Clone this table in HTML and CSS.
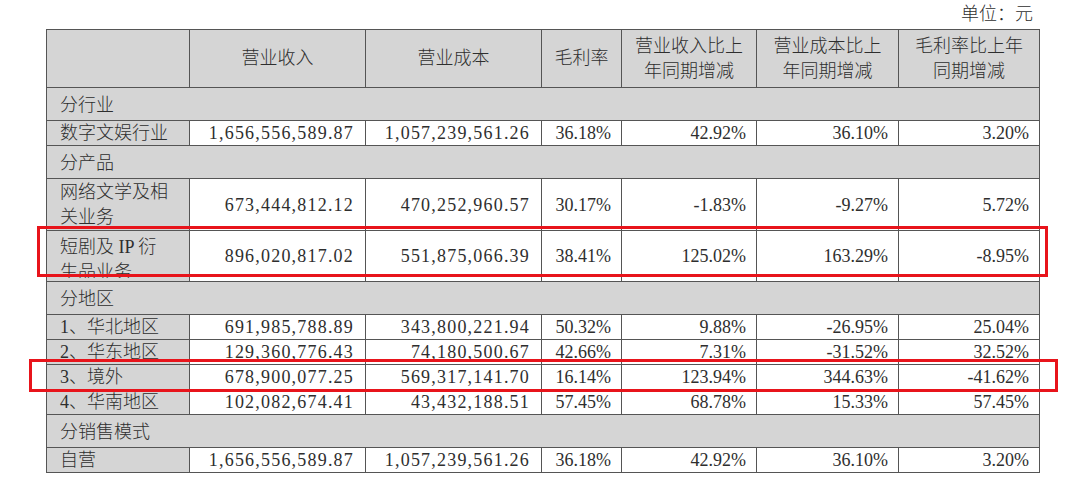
FILE: index.html
```html
<!DOCTYPE html>
<html lang="zh-CN">
<head>
<meta charset="utf-8">
<title>营业收入构成</title>
<link rel="stylesheet" href="styles.css">
</head>
<body>
<div class="page">
  <div class="unit">单位：元</div>
  <div class="sheet">
    <table class="tbl">
      <colgroup>
        <col class="c1"><col class="c2"><col class="c3"><col class="c4"><col class="c5"><col class="c6"><col class="c7">
      </colgroup>
      <thead>
        <tr class="head">
          <th></th>
          <th>营业收入</th>
          <th>营业成本</th>
          <th>毛利率</th>
          <th>营业收入比上<br>年同期增减</th>
          <th>营业成本比上<br>年同期增减</th>
          <th>毛利率比上年<br>同期增减</th>
        </tr>
      </thead>
      <tbody>
        <tr class="sec"><td colspan="7">分行业</td></tr>
        <tr class="row">
          <td class="lbl">数字文娱行业</td>
          <td class="amt">1,656,556,589.87</td>
          <td class="amt">1,057,239,561.26</td>
          <td class="pct">36.18%</td>
          <td class="pct">42.92%</td>
          <td class="pct">36.10%</td>
          <td class="pct">3.20%</td>
        </tr>
        <tr class="sec"><td colspan="7">分产品</td></tr>
        <tr class="row two">
          <td class="lbl">网络文学及相关业务</td>
          <td class="amt">673,444,812.12</td>
          <td class="amt">470,252,960.57</td>
          <td class="pct">30.17%</td>
          <td class="pct">-1.83%</td>
          <td class="pct">-9.27%</td>
          <td class="pct">5.72%</td>
        </tr>
        <tr class="row tall">
          <td class="lbl"><div class="clip">短剧及 IP 衍生品业务</div></td>
          <td class="amt">896,020,817.02</td>
          <td class="amt">551,875,066.39</td>
          <td class="pct">38.41%</td>
          <td class="pct">125.02%</td>
          <td class="pct">163.29%</td>
          <td class="pct">-8.95%</td>
        </tr>
        <tr class="sec"><td colspan="7">分地区</td></tr>
        <tr class="row">
          <td class="lbl">1、华北地区</td>
          <td class="amt">691,985,788.89</td>
          <td class="amt">343,800,221.94</td>
          <td class="pct">50.32%</td>
          <td class="pct">9.88%</td>
          <td class="pct">-26.95%</td>
          <td class="pct">25.04%</td>
        </tr>
        <tr class="row">
          <td class="lbl">2、华东地区</td>
          <td class="amt">129,360,776.43</td>
          <td class="amt">74,180,500.67</td>
          <td class="pct">42.66%</td>
          <td class="pct">7.31%</td>
          <td class="pct">-31.52%</td>
          <td class="pct">32.52%</td>
        </tr>
        <tr class="row">
          <td class="lbl">3、境外</td>
          <td class="amt">678,900,077.25</td>
          <td class="amt">569,317,141.70</td>
          <td class="pct">16.14%</td>
          <td class="pct">123.94%</td>
          <td class="pct">344.63%</td>
          <td class="pct">-41.62%</td>
        </tr>
        <tr class="row">
          <td class="lbl">4、华南地区</td>
          <td class="amt">102,082,674.41</td>
          <td class="amt">43,432,188.51</td>
          <td class="pct">57.45%</td>
          <td class="pct">68.78%</td>
          <td class="pct">15.33%</td>
          <td class="pct">57.45%</td>
        </tr>
        <tr class="sec"><td colspan="7">分销售模式</td></tr>
        <tr class="row">
          <td class="lbl">自营</td>
          <td class="amt">1,656,556,589.87</td>
          <td class="amt">1,057,239,561.26</td>
          <td class="pct">36.18%</td>
          <td class="pct">42.92%</td>
          <td class="pct">36.10%</td>
          <td class="pct">3.20%</td>
        </tr>
      </tbody>
    </table>
    <div class="mark mark-product"></div>
    <div class="mark mark-region"></div>
  </div>
</div>
</body>
</html>
```

FILE: styles.css
```css
html, body {
  margin: 0;
  padding: 0;
  background: #ffffff;
}

.page {
  width: 1080px;
  font-family: "Liberation Serif", "Noto Sans CJK SC", serif;
  font-size: 18px;
  color: #2e2e2e;
}

.unit {
  height: 29px;
  line-height: 29px;
  width: 1033px;
  text-align: right;
  font-weight: 300;
}

.sheet {
  position: relative;
  margin-left: 46px;
  width: 993px;
}

.tbl {
  border-collapse: collapse;
  table-layout: fixed;
  width: 993px;
}

.c1 { width: 143px; }
.c2 { width: 176px; }
.c3 { width: 176px; }
.c4 { width: 80px; }
.c5 { width: 135px; }
.c6 { width: 142px; }
.c7 { width: 141px; }

.tbl th,
.tbl td {
  border: 1px solid #555555;
  padding: 0;
  font-weight: 300;
  vertical-align: middle;
  line-height: 25px;
}

.tbl .head th {
  background: #d5d5d5;
  height: 57px;
  text-align: center;
}

.tbl .sec td {
  background: #d5d5d5;
  height: 33px;
  padding: 3px 0 0 13px;
  text-align: left;
  box-sizing: border-box;
}

.tbl .row td {
  height: 24px;
  line-height: 24px;
  background: #ffffff;
}

.tbl .row.two td {
  height: 48px;
}

.tbl .row.tall td {
  height: 50px;
}

.tbl .row .lbl {
  background: #d5d5d5;
  padding-left: 13px;
  padding-right: 20px;
  text-align: left;
  word-break: break-all;
}

.tbl .row.two .lbl {
  line-height: 25px;
  padding-top: 1px;
}

.tbl .row.tall .lbl {
  vertical-align: top;
  line-height: 25px;
}

.clip {
  height: 47px;
  padding-top: 4px;
  box-sizing: border-box;
  overflow: hidden;
}

.tbl .amt {
  text-align: right;
  padding-right: 11px;
  letter-spacing: 1.2px;
  white-space: nowrap;
}

.tbl .pct {
  text-align: right;
  padding-right: 10px;
  white-space: nowrap;
}

.mark {
  position: absolute;
  border: 3px solid #e8141b;
  box-sizing: border-box;
  pointer-events: none;
}

.mark-product {
  left: -9px;
  top: 197px;
  width: 1011px;
  height: 51px;
}

.mark-region {
  left: -17px;
  top: 330px;
  width: 1029px;
  height: 33px;
}
```
